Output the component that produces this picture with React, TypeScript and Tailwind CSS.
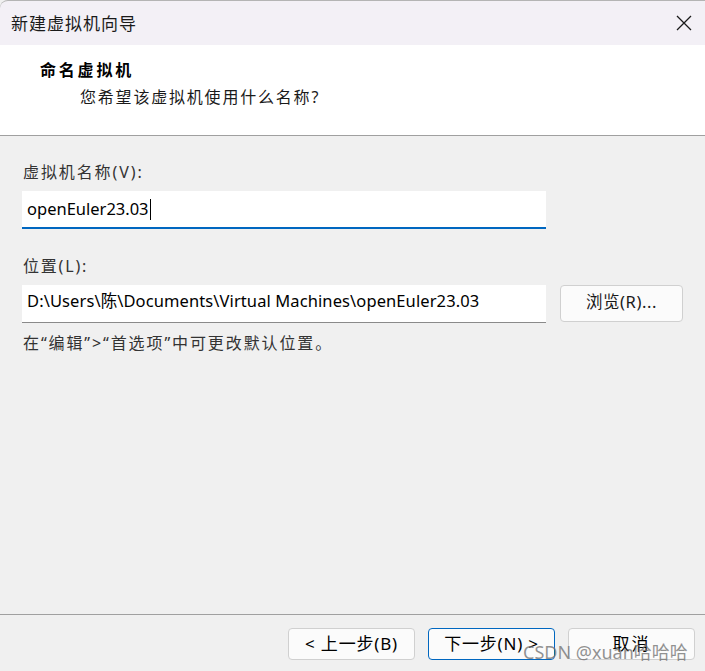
import React from "react";

const CJK = '"Noto Sans", "Noto Sans CJK SC", sans-serif';

export default function App() {
  return (
    <div
      className="relative w-[705px] h-[671px] bg-[#f0f0f0] flex flex-col overflow-hidden text-[#1a1a1a]"
      style={{ fontFamily: CJK }}
    >
      {/* Title bar */}
      <div className="h-[45px] shrink-0 bg-[#f3f0f6] border-t border-[#b4b4b4] rounded-tl-[8px] flex items-center justify-between pl-[11px] pr-[12px]">
        <span className="text-[17px] leading-none tracking-[1px] text-[#1a1a1a]">新建虚拟机向导</span>
        <svg width="16" height="16" viewBox="0 0 16 16" className="mr-[1px]">
          <path d="M1 1 L15 15 M15 1 L1 15" stroke="#1a1a1a" strokeWidth="1.3" fill="none" />
        </svg>
      </div>

      {/* Header */}
      <div className="h-[91px] shrink-0 bg-white border-b border-[#a0a0a0] pt-[14px]">
        <div className="pl-[40px] text-[16px] leading-[22px] font-bold tracking-[2.8px] text-black">命名虚拟机</div>
        <div className="pl-[80px] mt-[5px] text-[16px] leading-[22px] tracking-[1.8px] text-[#1a1a1a]">
          您希望该虚拟机使用什么名称?
        </div>
      </div>

      {/* Body */}
      <div className="flex-1 flex flex-col pl-[22px] pr-[22px]">
        <div className="mt-[25px] pl-[1px] text-[16px] leading-[22px] tracking-[1.9px] text-[#333]">虚拟机名称(V):</div>
        <div className="mt-[8px] w-[524px] h-[38px] bg-white border-b-2 border-[#0067c0] flex items-center pl-[5px]">
          <span className="text-[16.5px] leading-none text-black">openEuler23.03</span>
          <span className="ml-[1px] w-[1px] h-[21px] bg-black" />
        </div>

        <div className="mt-[26px] pl-[1px] text-[16px] leading-[22px] tracking-[1.8px] text-[#333]">位置(L):</div>
        <div className="mt-[8px] flex items-start gap-[14px]">
          <div className="w-[524px] h-[38px] bg-white border-b border-[#8a8a8a] flex items-center pl-[5px] pb-[4px]">
            <span className="text-[16.5px] leading-none tracking-[0.1px] text-black">D:\Users\陈\Documents\Virtual Machines\openEuler23.03</span>
          </div>
          <button className="w-[123px] h-[37px] rounded-[4px] border border-[#d0d0d0] bg-[#fbfbfb] text-[16.5px] tracking-[0.6px] text-[#1a1a1a] flex items-center justify-center pb-[2px]">
            浏览(R)...
          </button>
        </div>

        <div className="mt-[9px] pl-[1px] text-[16px] leading-[22px] tracking-[1.9px] text-[#333]">
          在“编辑”&gt;“首选项”中可更改默认位置。
        </div>
      </div>

      {/* Footer */}
      <div className="h-[57px] shrink-0 border-t border-[#a0a0a0] flex justify-end items-start pt-[13px] pr-[10px] gap-[13px]">
        <button className="w-[127px] h-[32px] rounded-[4px] border border-[#d0d0d0] bg-[#fbfbfb] text-[17px] tracking-[0.8px] text-black flex items-center justify-center">
          &lt; 上一步(B)
        </button>
        <button className="w-[127px] h-[32px] rounded-[4px] border border-[#0067c0] bg-[#fbfbfb] text-[17px] tracking-[0.8px] text-black flex items-center justify-center">
          下一步(N) &gt;
        </button>
        <button className="w-[127px] h-[32px] rounded-[4px] border border-[#d0d0d0] bg-[#fbfbfb] text-[17px] tracking-[2px] text-black flex items-center justify-center">
          取消
        </button>
      </div>

      {/* Watermark */}
      <div className="absolute left-[523px] top-[640px] text-[18px] leading-[24px] text-[rgba(110,110,110,0.75)] whitespace-nowrap pointer-events-none">
        CSDN @xuan哈哈哈
      </div>
    </div>
  );
}
